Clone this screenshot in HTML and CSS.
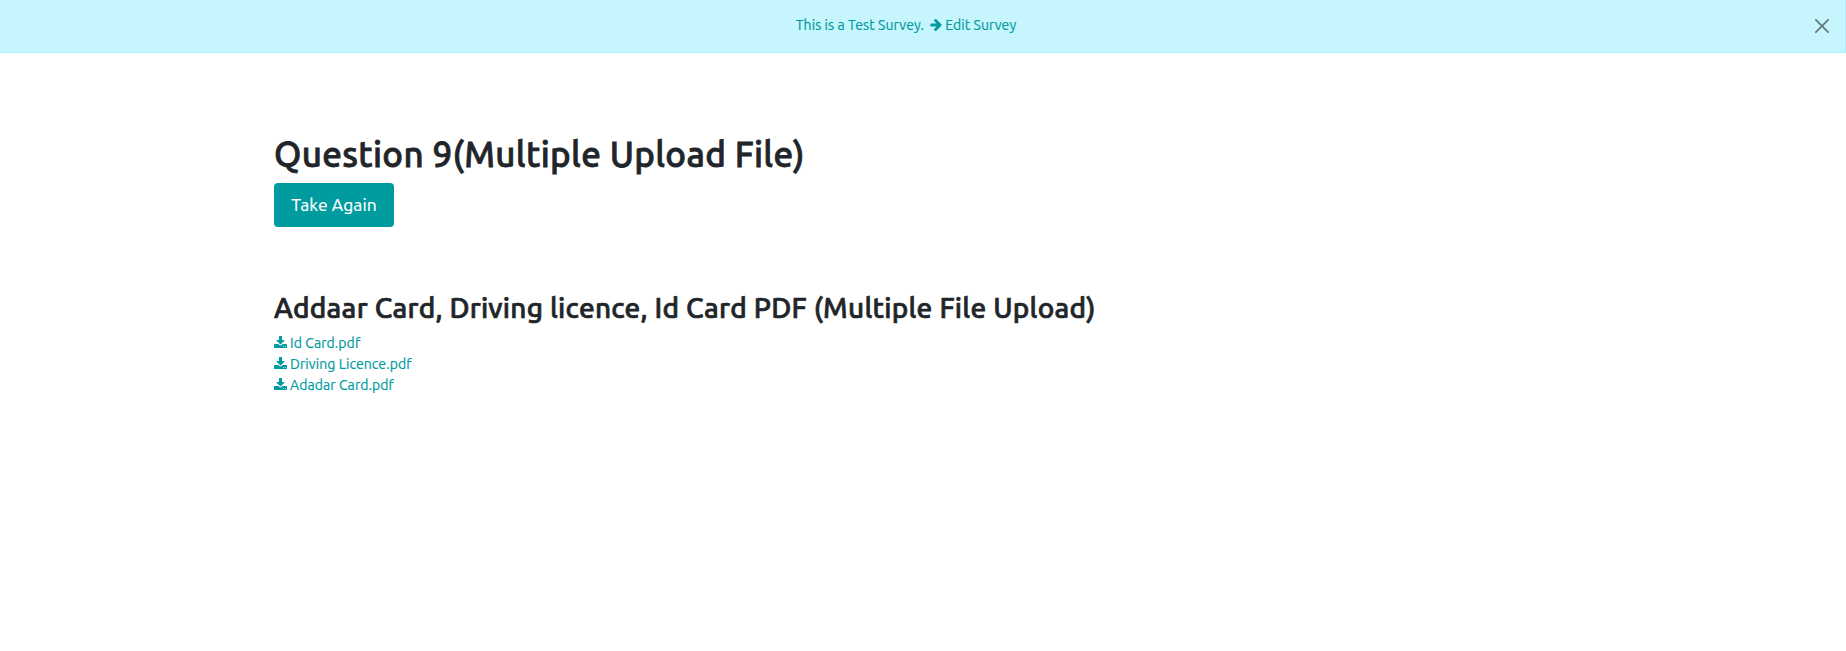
FILE: index.html
```html
<!DOCTYPE html>
<html lang="en">
<head>
<meta charset="utf-8">
<title>Survey</title>
<link rel="stylesheet" href="styles.css">
</head>
<body>
<svg width="0" height="0" class="defs">
<symbol id="download" viewBox="0 0 1664 1536"><path d="M1280 1344q0-26-19-45t-45-19-45 19-19 45 19 45 45 19 45-19 19-45zm256 0q0-26-19-45t-45-19-45 19-19 45 19 45 45 19 45-19 19-45zm128-224v320q0 40-28 68t-68 28H96q-40 0-68-28t-28-68v-320q0-40 28-68t68-28h465l135 136q58 56 136 56t136-56l136-136h464q40 0 68 28t28 68zm-325-569q17 41-14 70l-448 448q-18 19-45 19t-45-19L339 621q-31-29-14-70 17-39 59-39h256V64q0-26 19-45t45-19h256q26 0 45 19t19 45v448h256q42 0 59 39z"/></symbol>
</svg>
<div class="alert">
  <span class="notice">This is a Test Survey.</span>
  <a class="edit"><svg class="arrow" viewBox="0 181 1472 1558"><path d="M1472 960q0 54-37 91l-651 651q-39 37-91 37-51 0-90-37l-75-75q-38-38-38-91t38-91l293-293H117q-52 0-84.500-37.500T0 1024V896q0-53 32.500-90.500T117 768h704L528 474q-38-36-38-90t38-90l75-75q38-38 90-38 53 0 91 38l651 651q37 35 37 90z"/></svg><span>Edit Survey</span></a>
  <svg class="close" viewBox="0 0 16 16"><path d="M.293.293a1 1 0 011.414 0L8 6.586 14.293.293a1 1 0 111.414 1.414L9.414 8l6.293 6.293a1 1 0 01-1.414 1.414L8 9.414l-6.293 6.293a1 1 0 01-1.414-1.414L6.586 8 .293 1.707a1 1 0 010-1.414z"/></svg>
</div>
<main class="container">
  <h1 class="title">Question 9(Multiple Upload File)</h1>
  <a class="button">Take Again</a>
  <h2 class="question">Addaar Card, Driving licence, Id Card PDF (Multiple File Upload)</h2>
  <ul class="files">
    <li class="file"><svg class="download"><use href="#download"/></svg><span>Id Card.pdf</span></li>
    <li class="file"><svg class="download"><use href="#download"/></svg><span>Driving Licence.pdf</span></li>
    <li class="file"><svg class="download"><use href="#download"/></svg><span>Adadar Card.pdf</span></li>
  </ul>
</main>
</body>
</html>
```
FILE: styles.css
```css
* { box-sizing: border-box; }
body { margin: 0; background: #fff; color: #212529; font: 14px/21px Ubuntu, "Noto Sans", sans-serif; letter-spacing: .08px; -webkit-text-stroke: .2px currentColor; }
.defs { display: block; height: 0; }
.alert { position: relative; display: flex; justify-content: center; height: 53px; padding: 15px 33px 0 0; background: #c6f5fd; border: 1px solid #aaf0fc; border-width: 0 1px 1px 0; color: #009b9f; }
.notice { white-space: nowrap; margin-right: 6px; }
.edit { display: flex; white-space: nowrap; }
.arrow { width: 12px; height: 12px; margin: 4px 3px 0 0; fill: #009b9f; }
.close { position: absolute; right: 16px; top: 19px; width: 14px; height: 14px; opacity: .5; }
.container { width: 1298px; margin: 0 auto; padding-top: 80px; }
.title { margin: 0; font-size: 35px; line-height: 42px; font-weight: 500; letter-spacing: .33px; -webkit-text-stroke: .8px currentColor; white-space: nowrap; }
.button { display: flex; align-items: center; justify-content: center; width: 120px; height: 44px; margin-top: 8px; padding-bottom: 1px; border-radius: 4px; background: #009b9f; color: #fff; font-size: 17.5px; }
.question { margin: 64px 0 0; font-size: 28px; line-height: 34px; font-weight: 500; letter-spacing: .26px; -webkit-text-stroke: .7px currentColor; white-space: nowrap; }
.files { margin: 7px 0 0; padding: 1px 0 0; list-style: none; color: #009b9f; }
.file { display: flex; height: 21px; }
.download { width: 13px; height: 12px; margin: 3px 3px 0 0; fill: #009b9f; }
```
